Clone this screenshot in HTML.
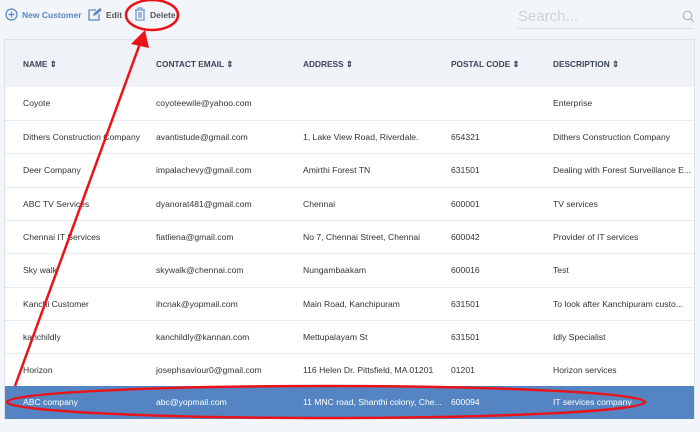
<!DOCTYPE html>
<html><head><style>
body{margin:0;width:700px;height:432px;background:#f2f6fa;font-family:"Liberation Sans",sans-serif;position:relative;overflow:hidden}
.tb{position:absolute;top:10px;font-size:8.5px;font-weight:bold;color:#555}
.box{position:absolute;left:4px;top:39px;width:691px;height:380px;background:#fff;border:1px solid #dde3ea;box-sizing:border-box}
.hdr{position:absolute;left:0;top:0;width:100%;height:47px;background:#eff3f7}
.h{position:absolute;top:19px;font-size:8.3px;font-weight:bold;color:#3a4558}
.row{position:absolute;left:0;width:100%;height:33px;border-top:1px solid #e8ecf0}
.row span{position:absolute;top:11px;font-size:8.6px;color:#333;white-space:nowrap}
.sel{background:#5485c2}
.sel span{color:#fff}
</style></head><body>
<svg style="position:absolute;left:5px;top:8px" width="13" height="13"><circle cx="6.5" cy="6.5" r="5.5" fill="none" stroke="#5a86c5" stroke-width="1.2"/><path d="M6.5 3.5v6M3.5 6.5h6" stroke="#5a86c5" stroke-width="1.2"/></svg>
<div class="tb" style="left:22px;color:#5a86c5">New Customer</div>
<svg style="position:absolute;left:88px;top:7px" width="14" height="14"><path d="M1 3h7M1 3v10h10V7" fill="none" stroke="#5a86c5" stroke-width="1.3"/><path d="M5 9l1-3 6-5 2 2-6 5z" fill="#5a86c5"/></svg>
<div class="tb" style="left:106px">Edit</div>
<svg style="position:absolute;left:134px;top:7px" width="12" height="14"><path d="M1 3h10M4 3V1h4v2M2 3v10h8V3M5 5v6M7 5v6" fill="none" stroke="#5a86c5" stroke-width="1.1"/></svg>
<div class="tb" style="left:150px">Delete</div>
<div style="position:absolute;left:518px;top:8px;font-size:15px;color:#ccd2d8">Search...</div>
<div style="position:absolute;left:518px;top:28px;width:176px;border-top:1px solid #d8dde3"></div>
<svg style="position:absolute;left:682px;top:10px" width="13" height="13"><circle cx="5.5" cy="5.5" r="4.3" fill="none" stroke="#aaa" stroke-width="1"/><path d="M8.5 8.5l3.5 3.5" stroke="#aaa" stroke-width="1"/></svg>
<div class="box">
<div class="hdr">
<div class="h" style="left:18px">NAME ⇕</div>
<div class="h" style="left:151px">CONTACT EMAIL ⇕</div>
<div class="h" style="left:298px">ADDRESS ⇕</div>
<div class="h" style="left:446px">POSTAL CODE ⇕</div>
<div class="h" style="left:548px">DESCRIPTION ⇕</div>
</div>
<div class="row" style="top:47px;border-top:none"><span style="left:18px">Coyote</span><span style="left:151px">coyoteewile@yahoo.com</span><span style="left:548px">Enterprise</span></div>
<div class="row" style="top:80px"><span style="left:18px">Dithers Construction Company</span><span style="left:151px">avantistude@gmail.com</span><span style="left:298px">1, Lake View Road, Riverdale.</span><span style="left:446px">654321</span><span style="left:548px">Dithers Construction Company</span></div>
<div class="row" style="top:113px"><span style="left:18px">Deer Company</span><span style="left:151px">impalachevy@gmail.com</span><span style="left:298px">Amirthi Forest TN</span><span style="left:446px">631501</span><span style="left:548px">Dealing with Forest Surveillance E...</span></div>
<div class="row" style="top:147px"><span style="left:18px">ABC TV Services</span><span style="left:151px">dyanorat481@gmail.com</span><span style="left:298px">Chennai</span><span style="left:446px">600001</span><span style="left:548px">TV services</span></div>
<div class="row" style="top:180px"><span style="left:18px">Chennai IT Services</span><span style="left:151px">fiatliena@gmail.com</span><span style="left:298px">No 7, Chennai Street, Chennai</span><span style="left:446px">600042</span><span style="left:548px">Provider of IT services</span></div>
<div class="row" style="top:213px"><span style="left:18px">Sky walk</span><span style="left:151px">skywalk@chennai.com</span><span style="left:298px">Nungambaakam</span><span style="left:446px">600016</span><span style="left:548px">Test</span></div>
<div class="row" style="top:247px"><span style="left:18px">Kanchi Customer</span><span style="left:151px">ihcnak@yopmail.com</span><span style="left:298px">Main Road, Kanchipuram</span><span style="left:446px">631501</span><span style="left:548px">To look after Kanchipuram custo...</span></div>
<div class="row" style="top:280px"><span style="left:18px">kanchildly</span><span style="left:151px">kanchildly@kannan.com</span><span style="left:298px">Mettupalayam St</span><span style="left:446px">631501</span><span style="left:548px">Idly Specialist</span></div>
<div class="row" style="top:313px"><span style="left:18px">Horizon</span><span style="left:151px">josephsaviour0@gmail.com</span><span style="left:298px">116 Helen Dr. Pittsfield, MA 01201</span><span style="left:446px">01201</span><span style="left:548px">Horizon services</span></div>
<div class="row sel" style="top:346px;height:33px;border-top:none"><span style="left:18px">ABC company</span><span style="left:151px">abc@yopmail.com</span><span style="left:298px">11 MNC road, Shanthi colony, Che...</span><span style="left:446px">600094</span><span style="left:548px">IT services company</span></div>
</div>
<svg style="position:absolute;left:0;top:0" width="700" height="432">
<g fill="none" stroke="#e8141a" stroke-width="2.5">
<ellipse cx="152" cy="15" rx="26" ry="15"/>
<ellipse cx="326" cy="402" rx="319" ry="16"/>
<path d="M15 386L142 38"/>
</g>
<path d="M145 30L131 44L149 48Z" fill="#e8141a"/>
</svg>
</body></html>
